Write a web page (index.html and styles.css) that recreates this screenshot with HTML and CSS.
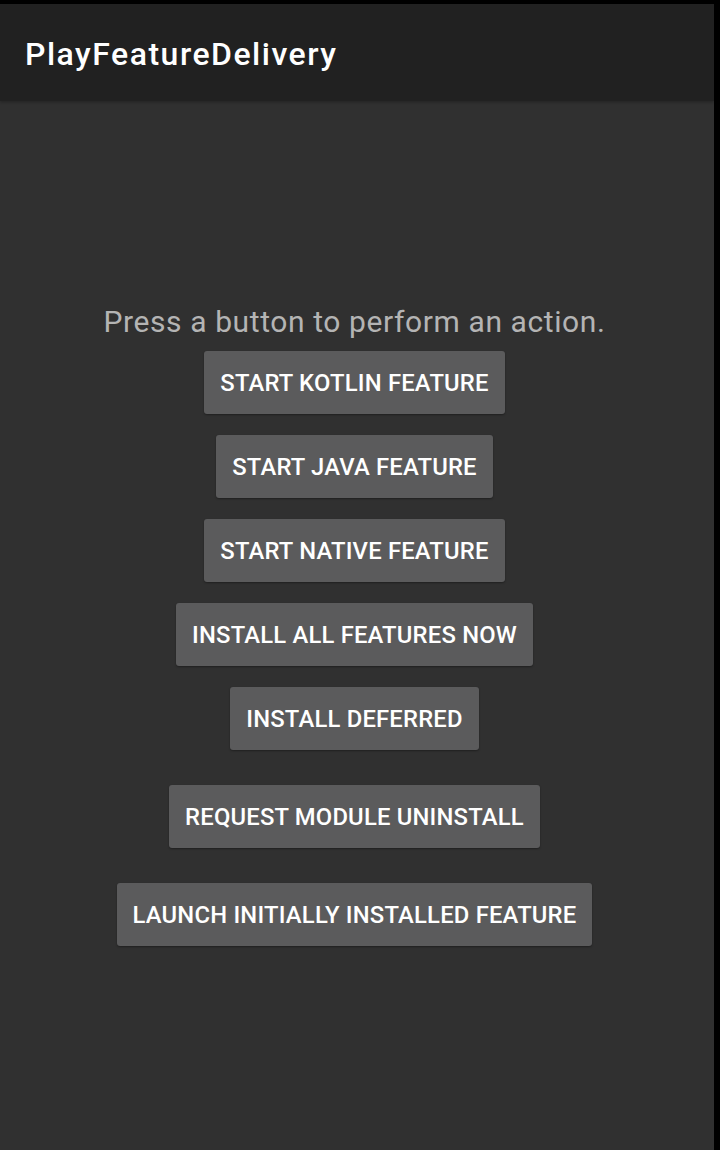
FILE: index.html
```html
<!DOCTYPE html>
<html>
<head>
<meta charset="utf-8">
<link rel="stylesheet" href="styles.css">
</head>
<body>
<div class="screen">
  <header class="toolbar"><span class="title">PlayFeatureDelivery</span></header>
  <main class="content">
    <p class="hint">Press a button to perform an action.</p>
    <div class="actions">
      <button class="btn">Start Kotlin Feature</button>
      <button class="btn">Start Java Feature</button>
      <button class="btn">Start Native Feature</button>
      <button class="btn">Install all features now</button>
      <button class="btn">Install deferred</button>
      <button class="btn btn-spaced">Request module uninstall</button>
      <button class="btn btn-spaced">Launch initially installed feature</button>
    </div>
  </main>
</div>
</body>
</html>
```
FILE: styles.css
```css
html, body {
  margin: 0;
  padding: 0;
  background: #000;
  height: 1150px;
  overflow: hidden;
}
.screen {
  margin-top: 4px;
  width: 714px;
  height: 1146px;
  background: #303030;
  display: flex;
  flex-direction: column;
  font-family: Roboto, "Noto Sans", sans-serif;
}
.toolbar {
  height: 97px;
  background: #212121;
  display: flex;
  align-items: center;
  padding: 3px 0 0 25px;
  box-sizing: border-box;
  box-shadow: 0 1px 3px rgba(0,0,0,0.3);
}
.title {
  color: #fff;
  font-size: 32px;
  font-weight: 500;
  letter-spacing: 1.5px;
}
.content {
  flex: 1;
  display: flex;
  flex-direction: column;
  align-items: center;
  padding-top: 203px;
  padding-right: 5px;
}
.hint {
  margin: 0;
  color: #b4b4b4;
  font-size: 30px;
  line-height: 36px;
  letter-spacing: 0.6px;
}
.actions {
  margin-top: 11px;
  display: flex;
  flex-direction: column;
  align-items: center;
  gap: 21px;
}
.btn {
  height: 63px;
  padding: 0 16px;
  border: none;
  border-radius: 3px;
  background: #5b5b5c;
  color: #fff;
  font-family: Roboto, "Noto Sans", sans-serif;
  font-size: 23.8px;
  font-weight: 500;
  letter-spacing: 0.2px;
  text-transform: uppercase;
  box-shadow: 0 1px 2px rgba(0,0,0,0.35);
}
.btn-spaced {
  margin-top: 14px;
}
```
